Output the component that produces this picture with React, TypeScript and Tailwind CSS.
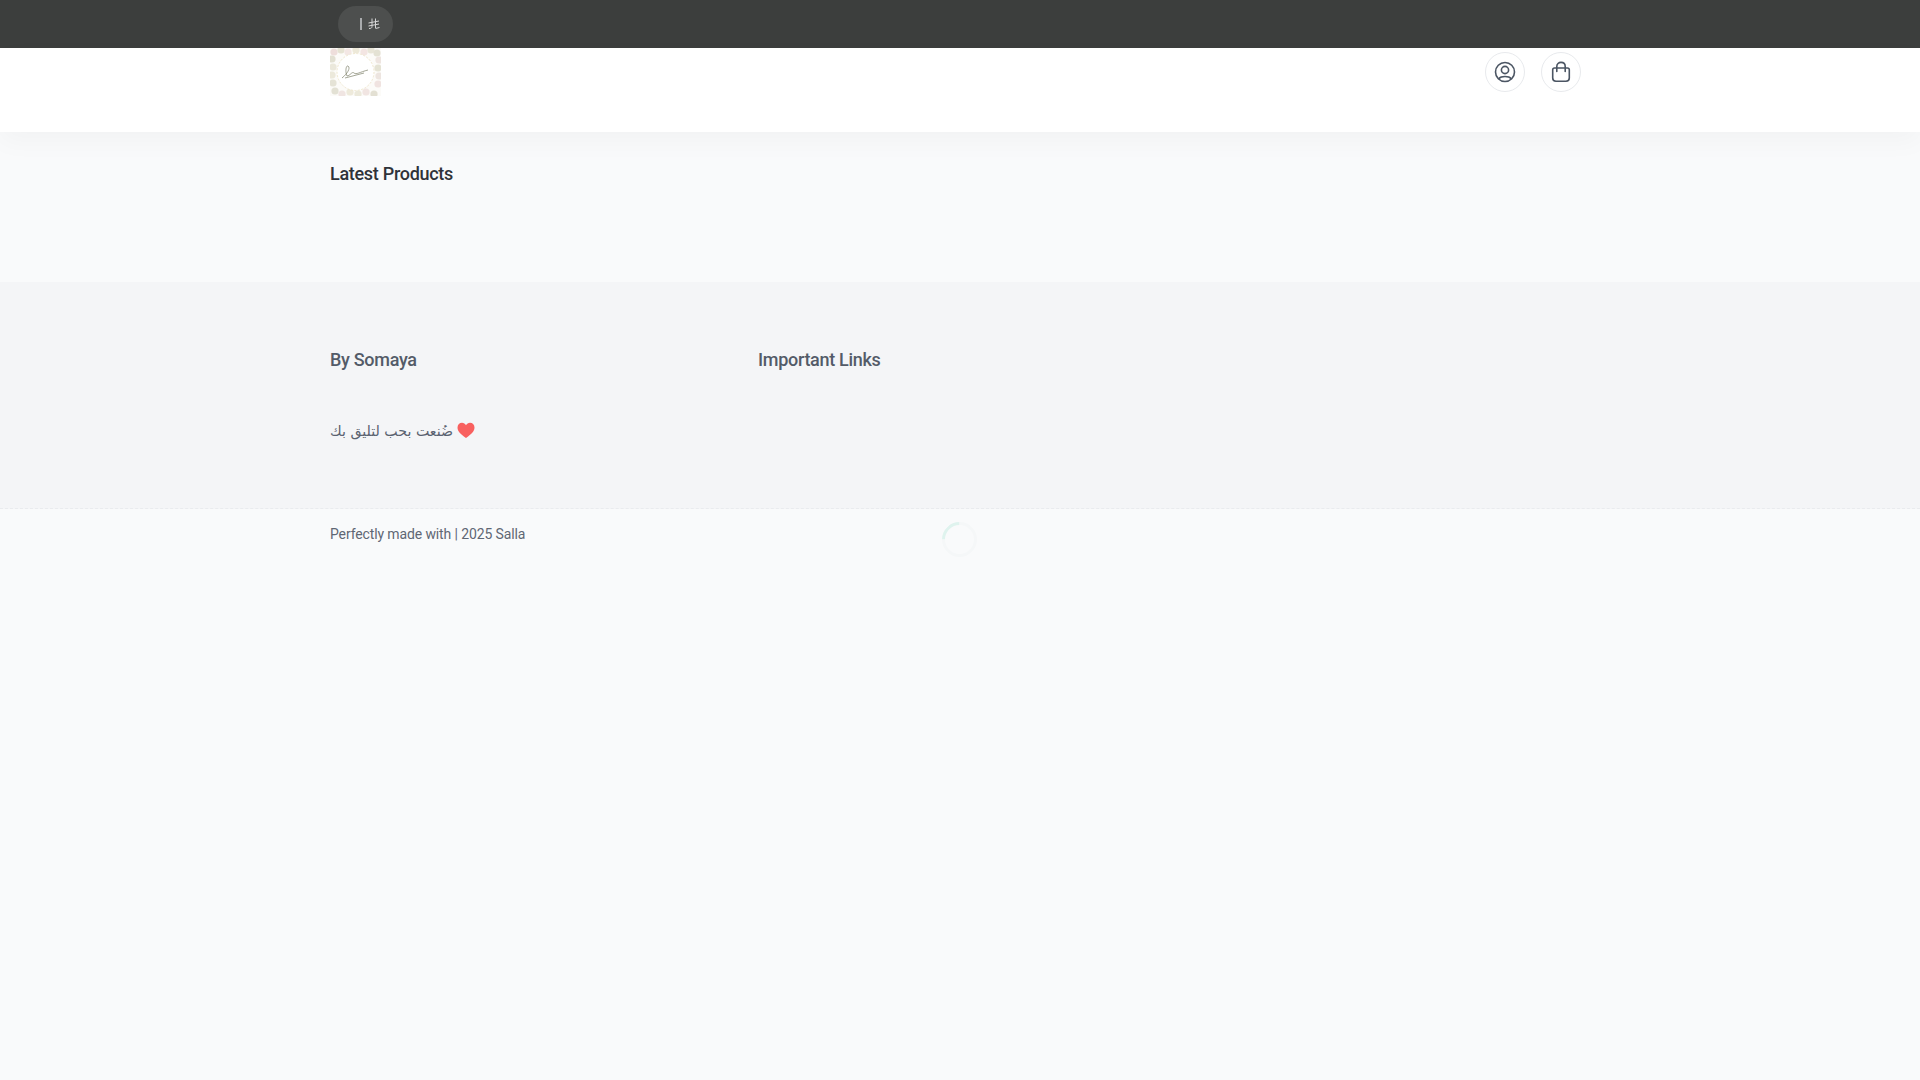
const flowers = [
  [4, 4, "#e9d3cf"], [11, 2, "#ddd9c4"], [18, 4, "#f0dfdc"], [26, 2, "#e8e2cc"], [34, 4, "#f0dcda"], [41, 2, "#e2decb"], [47, 5, "#dbd8c6"],
  [2, 11, "#d8d6c3"], [49, 12, "#e9dcd6"], [3, 19, "#e4e1d0"], [48, 20, "#dcd9c6"], [2, 27, "#e6e2d0"], [49, 28, "#e8dcd6"], [3, 35, "#dcdac8"],
  [48, 36, "#ecd9d6"], [5, 43, "#d9d7c6"], [12, 46, "#ecdcda"], [20, 44, "#e9e3cf"], [28, 46, "#e6e2d0"], [36, 44, "#eddcda"], [44, 46, "#d9d6c4"],
];

function Logo() {
  return (
    <svg width="51" height="48" viewBox="0 0 51 48" className="shrink-0">
      <rect width="51" height="48" fill="#fcfbf8" />
      <g opacity="0.7">
        {flowers.map(([x, y, c], i) => (
          <circle key={i} cx={x as number} cy={y as number} r="3.6" fill={c as string} />
        ))}
      </g>
      <circle cx="25.5" cy="24" r="18.5" fill="#ffffff" stroke="#f0e8cf" strokeWidth="1" strokeDasharray="2 1.5" />
      <path d="M12 30 C17 26 21 20 18 18 C16 17 15 24 17 28 C20 28 22 23 24 25 C26 27 30 24 38 22 M15 30 L34 25" fill="none" stroke="#7d8068" strokeWidth="0.7" />
    </svg>
  );
}

function UserIcon() {
  return (
    <svg width="22" height="22" viewBox="0 0 22 22" fill="none" stroke="#4b5563" strokeWidth="1.6" strokeLinecap="round">
      <circle cx="11" cy="11" r="9.5" />
      <circle cx="11" cy="9" r="3.6" />
      <path d="M5 17.5 C7 14.8 15 14.8 17 17.5" />
    </svg>
  );
}

function BagIcon() {
  return (
    <svg width="20" height="22" viewBox="0 0 20 22" fill="none" stroke="#4b5563" strokeWidth="1.6" strokeLinecap="round" strokeLinejoin="round">
      <path d="M3.5 7 H16.5 C17.6 7 18.3 7.8 18.3 8.8 V17 C18.3 19 17 20.2 15 20.2 H5 C3 20.2 1.7 19 1.7 17 V8.8 C1.7 7.8 2.4 7 3.5 7 Z" />
      <path d="M5.8 10.5 V5.5 C5.8 3 7.7 1.4 10 1.4 C12.3 1.4 14.2 3 14.2 5.5 V10.5" />
    </svg>
  );
}

export default function App() {
  return (
    <div className="relative min-h-[1080px] bg-[#f9fafb] font-['Roboto','Noto_Sans',sans-serif]">
      <div className="h-12 bg-[#3c3e3d]">
        <div className="mx-auto w-[1260px] pl-2 pt-1.5">
          <div className="flex h-9 w-[55px] items-center justify-end gap-[6px] rounded-full bg-[#4d4f4e] pr-[13px]">
            <span className="-mt-[1px] h-[12px] w-[2px] bg-[#a9abad]" />
            <svg width="12" height="12" viewBox="0 0 12 12" fill="none" stroke="#d5d6d6" strokeWidth="1" className="-mt-[1px]">
              <path d="M4 0.5 V8.5 C4 10 3 10.5 1 10.5 M7.5 0.5 V10 M0.5 5 L11 3 M0.5 8 L11 6 M7.5 10.5 L11.5 9.5" />
            </svg>
          </div>
        </div>
      </div>

      <header className="relative h-[84px] bg-white shadow-[0_10px_24px_rgba(17,24,39,0.03)]">
        <div className="mx-auto flex w-[1260px] items-start justify-between pr-[9px]">
          <Logo />
          <div className="flex gap-4 pt-1">
            <button className="flex h-10 w-10 items-center justify-center rounded-full border border-[#e8eaed] bg-white">
              <UserIcon />
            </button>
            <button className="flex h-10 w-10 items-center justify-center rounded-full border border-[#e8eaed] bg-white">
              <BagIcon />
            </button>
          </div>
        </div>
      </header>

      <main className="h-[150px]">
        <div className="mx-auto w-[1260px] pt-[30px]">
          <h2 className="text-[18px] leading-6 font-medium tracking-[-0.3px] text-[#2f3239]">Latest Products</h2>
        </div>
      </main>

      <footer className="h-[227px] border-b border-dashed border-[#e9ebee] bg-[#f4f5f7]">
        <div className="mx-auto flex w-[1260px] pt-[66px]">
          <div className="w-[428px]">
            <h3 className="text-[18px] leading-6 font-medium tracking-[-0.3px] text-[#535b68]">By Somaya</h3>
            <p className="mt-[47px] flex items-center gap-[4px] text-[15px] leading-6 text-[#5a6270]">
              <span dir="rtl" className="font-['DejaVu_Sans','Noto_Sans',sans-serif] text-[14.2px]">ضُنعت بحب لتليق بك</span>
              <svg width="18" height="17" viewBox="0 0 18 17" className="-mt-[2px]">
                <path d="M9 16 C3 11.5 0.5 8.8 0.5 5.4 C0.5 2.6 2.6 0.8 5 0.8 C6.7 0.8 8.2 1.7 9 3.2 C9.8 1.7 11.3 0.8 13 0.8 C15.4 0.8 17.5 2.6 17.5 5.4 C17.5 8.8 15 11.5 9 16 Z" fill="#f8605f" />
              </svg>
            </p>
          </div>
          <div>
            <h3 className="text-[18px] leading-6 font-medium tracking-[-0.3px] text-[#535b68]">Important Links</h3>
          </div>
        </div>
      </footer>

      <div className="mx-auto w-[1260px] pt-[15px]">
        <p className="text-[14px] leading-5 tracking-[-0.12px] text-[#5f6774]">Perfectly made with | 2025 Salla</p>
      </div>

      <div className="absolute top-[522px] left-[942px] h-[35px] w-[35px] -rotate-45 rounded-full border-[3px] border-[#f5f7f8] border-t-[#dff3ee]" />
    </div>
  );
}
